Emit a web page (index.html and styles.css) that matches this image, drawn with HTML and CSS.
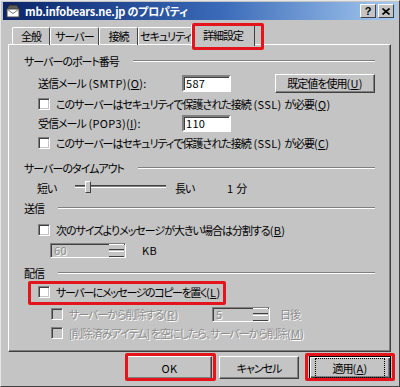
FILE: index.html
```html
<!DOCTYPE html>
<html lang="ja">
<head>
    <meta charset="UTF-8">
    <title>mb.infobears.ne.jp のプロパティ</title>
    <link rel="stylesheet" href="styles.css">
</head>
<body>
    <div class="window">
        <div class="titlebar">
            <svg class="app-icon" width="16" height="14" viewBox="0 0 16 14">
                <path d="M1 6 L4 1 H12 L15 6 Z" fill="#5a5a5a" stroke="#222" stroke-width="1"/>
                <rect x="2" y="5" width="12" height="8" fill="#fff" stroke="#444" stroke-width="1"/>
                <path d="M2.5 5.5 L8 9.5 L13.5 5.5" fill="none" stroke="#777" stroke-width="1"/>
            </svg>
            <span class="title">mb.infobears.ne.jp のプロパティ</span>
            <div class="caption-buttons">
                <div class="cap-btn">?</div>
                <div class="cap-btn">
                    <svg width="8" height="7" viewBox="0 0 8 7">
                        <path d="M0.5 0.5 L7.5 6.5 M7.5 0.5 L0.5 6.5" stroke="#000" stroke-width="1.6"/>
                    </svg>
                </div>
            </div>
        </div>

        <div class="dialog">
            <div class="tabs">
                <div class="tab tab-general">全般</div>
                <div class="tab tab-server">サーバー</div>
                <div class="tab tab-conn">接続</div>
                <div class="tab tab-sec">セキュリティ</div>
                <div class="tab active mark mark-tab">詳細設定</div>
            </div>

            <div class="panel">
                <!-- ポート番号 -->
                <div class="row head"><span>サーバーのポート番号</span><i class="etch"></i></div>
                <div class="row port-row">
                    <label class="port-label">送信メール<span class="lat"> (SMTP)(<u>O</u>):</span></label>
                    <div class="textbox lat">587</div>
                    <div class="btn btn-default-val">既定値を使用<span class="lat">(<u>U</u>)</span></div>
                </div>
                <div class="row cb-row cb-short">
                    <span class="checkbox"></span>
                    <span>このサーバーはセキュリティで保護された接続<span class="lat"> (SSL) </span>が必要<span class="lat">(<u>Q</u>)</span></span>
                </div>
                <div class="row port-row pop-row">
                    <label class="port-label">受信メール<span class="lat"> (POP3)(<u>I</u>):</span></label>
                    <div class="textbox lat">110</div>
                </div>
                <div class="row cb-row">
                    <span class="checkbox"></span>
                    <span>このサーバーはセキュリティで保護された接続<span class="lat"> (SSL) </span>が必要<span class="lat">(<u>C</u>)</span></span>
                </div>

                <!-- タイムアウト -->
                <div class="row head gap5"><span>サーバーのタイムアウト</span><i class="etch"></i></div>
                <div class="row timeout-row">
                    <span class="short">短い</span>
                    <div class="slider">
                        <div class="track"></div>
                        <div class="thumb"></div>
                    </div>
                    <span class="long">長い</span>
                    <span class="minutes"><span class="lat">1 </span>分</span>
                </div>

                <!-- 送信 -->
                <div class="row head"><span>送信</span><i class="etch"></i></div>
                <div class="row cb-row gap2">
                    <span class="checkbox"></span>
                    <span>次のサイズよりメッセージが大きい場合は分割する<span class="lat">(<u>B</u>)</span></span>
                </div>
                <div class="row split-row">
                    <div class="spinbox spin-size">
                        <span class="spin-value lat">60</span>
                        <span class="spin-btns"><i></i><i></i></span>
                    </div>
                    <span class="unit lat">KB</span>
                </div>

                <!-- 配信 -->
                <div class="row head head-short gap4"><span>配信</span><i class="etch"></i></div>
                <div class="row cb-row">
                    <div class="mark-wrap mark mark-copy">
                        <span class="checkbox"></span>
                        <span class="tight">サーバーにメッセージのコピーを置く<span class="lat">(<u>L</u>)</span></span>
                    </div>
                </div>
                <div class="row cb-row sub gap2 disabled">
                    <span class="checkbox"></span>
                    <span class="del-label">サーバーから削除する<span class="lat">(<u>R</u>)</span></span>
                    <div class="spinbox spin-days">
                        <span class="spin-value lat">5</span>
                        <span class="spin-btns"><i></i><i></i></span>
                    </div>
                    <span class="unit days">日後</span>
                </div>
                <div class="row cb-row sub last disabled">
                    <span class="checkbox"></span>
                    <span>[削除済みアイテム] を空にしたら、サーバーから削除<span class="lat">(<u>M</u>)</span></span>
                </div>
            </div>

            <div class="footer">
                <div class="btn footer-btn btn-ok mark mark-ok lat">OK</div>
                <div class="btn footer-btn btn-cancel">キャンセル</div>
                <div class="btn footer-btn btn-apply mark mark-apply"><span class="focus">適用<span class="lat">(<u>A</u>)</span></span></div>
            </div>
        </div>
    </div>
</body>
</html>
```

FILE: styles.css
```css
body {
    margin: 0;
    padding: 0;
    background-color: #c4c4c4;
    font-family: "Noto Sans CJK JP", "Liberation Sans", sans-serif;
    font-size: 11px;
    font-feature-settings: "palt";
    letter-spacing: -1px;
    color: #000;
}
.lat {
    letter-spacing: 0.3px;
}
u {
    text-decoration: underline;
    text-underline-offset: 1px;
}
.window {
    width: 400px;
    height: 387px;
    box-sizing: border-box;
    padding: 1px 2px 2px 2px;
    border-top: 1px solid #e6e6e6;
    border-left: 1px solid #e6e6e6;
    border-right: 1px solid #404040;
    border-bottom: 1px solid #404040;
}

/* タイトルバー */
.titlebar {
    height: 18px;
    display: flex;
    align-items: center;
    padding: 0 3px 0 2px;
    background: linear-gradient(to right, #0a246a, #3a6ab8 55%, #a6caf0);
    color: white;
}
.app-icon {
    margin-right: 4px;
}
.title {
    font-weight: bold;
    letter-spacing: -0.2px;
}
.caption-buttons {
    margin-left: auto;
    display: flex;
    gap: 2px;
}
.cap-btn {
    width: 14px;
    height: 12px;
    background-color: #c4c4c4;
    border: 1px solid;
    border-color: #fff #404040 #404040 #fff;
    color: #000;
    font-weight: bold;
    font-size: 11px;
    letter-spacing: 0;
    line-height: 12px;
    display: flex;
    align-items: center;
    justify-content: center;
    font-family: "Liberation Sans", sans-serif;
}

/* ダイアログ本体 */
.dialog {
    padding: 2px 6px 0 5px;
}
.tabs {
    display: flex;
    align-items: flex-end;
    height: 22px;
    padding-left: 4px;
    position: relative;
    z-index: 1;
}
.tab {
    height: 17px;
    line-height: 17px;
    box-sizing: content-box;
    text-align: center;
    white-space: nowrap;
    border: 1px solid;
    border-bottom: none;
    border-color: #fff #404040 transparent #fff;
    border-radius: 2px 2px 0 0;
    margin-bottom: -1px;
}
.tab-general { width: 36px; }
.tab-server { width: 47px; }
.tab-conn { width: 37px; }
.tab-sec { width: 53px; }
.tab.active {
    height: 21px;
    line-height: 20px;
    width: 62px;
    margin-left: -2px;
    background-color: #c4c4c4;
    margin-bottom: -2px;
}
.panel {
    height: 308px;
    box-sizing: border-box;
    border: 1px solid;
    border-color: #fff #404040 #404040 #fff;
    box-shadow: inset -1px -1px 0 #808080;
    padding: 6px 15px 0 15px;
    display: flex;
    flex-direction: column;
}
.row {
    display: flex;
    align-items: center;
    height: 20px;
    flex-shrink: 0;
    white-space: nowrap;
}
.head span {
    margin-right: 14px;
}
.etch {
    flex: 1;
    height: 0;
    border-top: 1px solid #808080;
    border-bottom: 1px solid #fff;
}
.head-short {
    height: 18px;
}
.gap2 { margin-top: 2px; }
.gap4 { margin-top: 4px; }
.gap5 { margin-top: 5px; }

.port-row {
    height: 24px;
    padding-left: 14px;
}
.pop-row {
    height: 20px;
}
.port-label {
    width: 144px;
}
.textbox {
    width: 43px;
    height: 13px;
    line-height: 13px;
    padding-left: 2px;
    background-color: #fff;
    border: 2px solid;
    border-color: #808080 #fff #fff #808080;
    box-shadow: inset 1px 1px 0 #404040;
}
.btn {
    display: flex;
    align-items: center;
    justify-content: center;
    box-sizing: border-box;
    background-color: #c4c4c4;
    border: 1px solid;
    border-color: #fff #404040 #404040 #fff;
    box-shadow: inset -1px -1px 0 #808080;
}
.btn-default-val {
    margin-left: auto;
    width: 100px;
    height: 19px;
}

.cb-row {
    padding-left: 14px;
}
.cb-short {
    height: 18px;
}
.checkbox {
    width: 10px;
    height: 10px;
    margin-right: 6px;
    background-color: #fff;
    border: 1px solid;
    border-color: #808080 #fff #fff #808080;
    box-shadow: inset 1px 1px 0 #404040, inset -1px -1px 0 #c4c4c4;
    flex-shrink: 0;
}

/* タイムアウト */
.timeout-row {
    padding-left: 13px;
}
.short {
    width: 38px;
}
.slider {
    position: relative;
    width: 91px;
    height: 14px;
}
.track {
    margin-top: 4px;
    height: 1px;
    border-top: 1px solid #404040;
    border-bottom: 1px solid #fff;
    background-color: #808080;
}
.thumb {
    position: absolute;
    left: 10px;
    top: 0;
    width: 4px;
    height: 10px;
    background-color: #c4c4c4;
    border: 1px solid;
    border-color: #fff #404040 #404040 #fff;
}
.long {
    margin-left: 9px;
    width: 52px;
}

/* 送信 */
.split-row {
    padding-left: 26px;
}
.spinbox {
    display: flex;
    align-items: center;
    box-sizing: border-box;
    height: 15px;
    border: 1px solid;
    border-color: #808080 #fff #fff #808080;
    box-shadow: inset 1px 1px 0 #404040;
    background-color: #c4c4c4;
    color: #8c8c8c;
    text-shadow: 1px 1px 0 #fff;
}
.spin-size {
    width: 76px;
}
.spin-value {
    flex: 1;
    padding-left: 3px;
    line-height: 13px;
}
.spin-btns {
    width: 15px;
    height: 13px;
    display: flex;
    flex-direction: column;
    gap: 1px;
    margin-right: 1px;
}
.spin-btns i {
    flex: 1;
    border-top: 1px solid #fff;
    border-bottom: 1px solid #404040;
    background-color: #c4c4c4;
}
.unit {
    margin-left: 16px;
}

/* 配信 */
.mark-wrap {
    display: flex;
    align-items: center;
    height: 100%;
}
.tight {
    letter-spacing: -1.4px;
}
.tight .lat {
    letter-spacing: 0.3px;
}
.sub {
    padding-left: 27px;
}
.last {
    height: 18px;
}
.disabled {
    color: #8c8c8c;
    text-shadow: 1px 1px 0 #fff;
}
.disabled .checkbox {
    background-color: #c4c4c4;
}
.del-label {
    width: 143px;
}
.spin-days {
    width: 58px;
}
.unit.days {
    margin-left: 10px;
}

/* ボタン */
.footer {
    display: flex;
    justify-content: flex-end;
    padding-top: 4px;
}
.footer-btn {
    height: 23px;
}
.btn-ok {
    width: 85px;
}
.btn-cancel {
    width: 80px;
    margin-left: 7px;
}
.btn-apply {
    width: 82px;
    margin-left: 10px;
    border: 1px solid #000;
    box-shadow: inset 1px 1px 0 #fff, inset -1px -1px 0 #404040, inset -2px -2px 0 #808080;
}
.focus {
    padding: 1px 16px;
    border: 1px dotted #000;
}

/* 赤枠の注記 */
.mark {
    position: relative;
}
.mark::after {
    content: "";
    position: absolute;
    border: 3px solid #e3141b;
    border-radius: 2px;
    pointer-events: none;
}
.mark-tab::after {
    top: -2px;
    left: 0;
    right: -10px;
    bottom: -4px;
}
.mark-copy::after {
    top: -1px;
    left: -10px;
    right: -6px;
    bottom: -3px;
}
.mark-ok::after {
    top: -4px;
    left: -3px;
    right: -5px;
    bottom: -3px;
}
.mark-apply::after {
    top: -4px;
    left: -5px;
    right: -5px;
    bottom: -3px;
}
```
